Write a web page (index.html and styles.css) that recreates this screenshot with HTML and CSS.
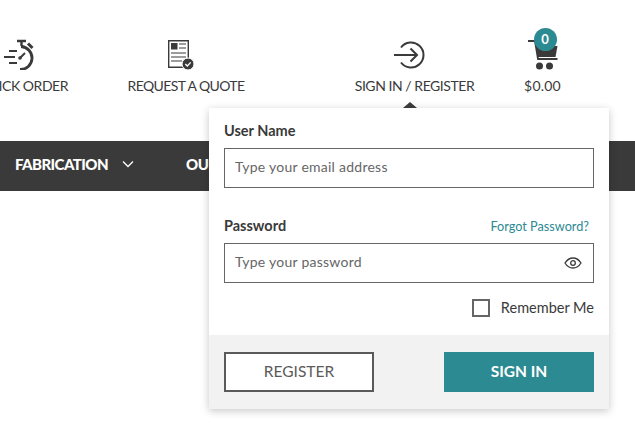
FILE: index.html
```html
<!DOCTYPE html>
<html lang="en">
<head>
<meta charset="utf-8">
<title>Sign in</title>
<link rel="stylesheet" href="styles.css">
</head>
<body>
<header class="top">
  <a class="tool tool-quick">
    <svg class="ico ico-quick" width="36" height="32" viewBox="0 0 36 32" fill="none" stroke="#3a3a3a" stroke-width="2.4">
      <path d="M14 3h9M18.500 3v5"/>
      <path d="M25 5.500l4.500 4.500" stroke-width="3"/>
      <path d="M18 8.500a11.500 11.500 0 1 1 -1 23" stroke-width="2.800"/>
      <path d="M6 13h8M1 19h11M6 25h8" stroke-width="1.800"/>
      <path d="M17 20l5-5" stroke-width="2"/>
      <circle cx="17" cy="20" r="1.800" fill="#3a3a3a" stroke="none"/>
    </svg>
    <span class="tool-label">QUICK ORDER</span>
  </a>
  <a class="tool tool-quote">
    <svg class="ico ico-quote" width="28" height="32" viewBox="0 0 28 32" fill="none" stroke="#3a3a3a">
      <path d="M1.700 2.700h19.600v26.600H1.700z" stroke-width="1.400"/>
      <path d="M4 5h6.500v6.500H4z" fill="#3a3a3a" stroke="none"/>
      <path d="M12 6h7M12 10h7M4 15h15M4 19h15M4 23h11" stroke-width="1.200"/>
      <circle cx="21" cy="26" r="6" fill="#3a3a3a" stroke="#fff" stroke-width="1"/>
      <path d="M18.300 26l2 2 3.400-3.600" stroke="#fff" stroke-width="1.300"/>
    </svg>
    <span class="tool-label">REQUEST A QUOTE</span>
  </a>
  <a class="tool tool-sign">
    <svg class="ico ico-sign" width="32" height="32" viewBox="0 0 32 32" fill="none" stroke="#3a3a3a" stroke-width="2">
      <path d="M7 8.500a12.500 12.500 0 1 1 0 15"/>
      <path d="M0 16h23M16.500 9.500L23 16l-6.500 6.500"/>
    </svg>
    <span class="tool-label">SIGN IN / REGISTER</span>
  </a>
  <a class="tool tool-cart">
    <span class="cart-wrap">
      <svg class="ico" width="32" height="32" viewBox="0 0 32 32" fill="none">
        <path d="M1 3h7l3 18h19.500" stroke="#3a3a3a" stroke-width="1.800"/>
        <path d="M9 8h21.500l-2 11H11z" fill="#3a3a3a"/>
        <circle cx="12.500" cy="28" r="3.500" fill="#3a3a3a"/>
        <circle cx="22.500" cy="28" r="3.500" fill="#3a3a3a"/>
      </svg>
      <span class="badge">0</span>
    </span>
    <span class="tool-label tool-price">$0.00</span>
  </a>
</header>

<nav class="nav">
  <a class="nav-item">FABRICATION
    <svg class="chev" width="12" height="8" viewBox="0 0 12 8" fill="none" stroke="#fff" stroke-width="1.300"><path d="M1 1.500l5 5 5-5"/></svg>
  </a>
  <a class="nav-item nav-second">OUR SERVICES</a>
</nav>

<section class="pop">
  <span class="caret"></span>
  <form class="pop-body">
    <label class="field-label" for="user">User Name</label>
    <input class="input" id="user" type="text" placeholder="Type your email address">
    <div class="pw-head">
      <label class="field-label" for="pw">Password</label>
      <a class="forgot">Forgot Password?</a>
    </div>
    <div class="pw-box">
      <input class="input" id="pw" type="text" placeholder="Type your password">
      <svg class="eye" width="18" height="12" viewBox="0 0 18 12" fill="none" stroke="#3a3a3a" stroke-width="1.300">
        <path d="M1 6c2-3.200 4.800-5 8-5s6 1.800 8 5c-2 3.200-4.800 5-8 5s-6-1.800-8-5z"/>
        <circle cx="9" cy="6" r="2.300"/>
      </svg>
    </div>
    <div class="remember">
      <span class="check"></span>
      <span class="remember-text">Remember Me</span>
    </div>
  </form>
  <div class="pop-foot">
    <a class="btn btn-outline">REGISTER</a>
    <a class="btn btn-solid">SIGN IN</a>
  </div>
</section>
</body>
</html>
```
FILE: styles.css
```css
* { box-sizing: border-box; }
html, body { margin: 0; padding: 0; }
body {
  width: 635px;
  height: 432px;
  overflow: hidden;
  background: #fff;
  font-family: "Lato", "Open Sans", sans-serif;
  color: #3a3a3a;
  position: relative;
}
.top {
  height: 141px;
  display: flex;
  padding-top: 38px;
  margin-left: -42px;
}
.tool {
  display: flex;
  flex-direction: column;
  align-items: center;
  flex: none;
}
.tool-quick { width: 130px; }
.tool-quote { width: 196px; }
.tool-sign { width: 174px; margin-left: 43.500px; }
.tool-cart { width: 82px; }
.ico { display: block; flex: none; }
.ico-quick { margin-right: 4px; }
.ico-quote { margin-right: 10px; }
.ico-sign { margin-right: 9px; margin-top: 1px; margin-bottom: -1px; }
.tool-label {
  margin-top: 7px;
  font-size: 14px;
  line-height: 18px;
  letter-spacing: -0.45px;
  white-space: nowrap;
  color: #3a3a3a;
}
.tool-quote .tool-label { letter-spacing: -0.6px; }
.tool-label.tool-price { letter-spacing: 0.2px; }
.cart-wrap { position: relative; display: block; }
.badge {
  position: absolute;
  top: -10px;
  left: 7px;
  width: 23px;
  height: 23px;
  border-radius: 50%;
  background: #2b8a92;
  color: #fff;
  font-size: 13px;
  font-weight: 700;
  line-height: 23px;
  text-align: center;
}
.nav {
  height: 50px;
  background: #3a3a3a;
  display: flex;
  align-items: center;
  padding-left: 15px;
  padding-bottom: 4px;
  color: #fff;
}
.nav-item {
  font-size: 15px;
  font-weight: 900;
  letter-spacing: -0.55px;
  white-space: nowrap;
  display: flex;
  align-items: center;
}
.chev { margin-left: 14px; }
.nav-second { margin-left: 52px; }
.pop {
  position: absolute;
  left: 209px;
  top: 108px;
  width: 400px;
  height: 301px;
  background: #fff;
  box-shadow: 0 2px 8px rgba(0, 0, 0, 0.22);
  display: flex;
  flex-direction: column;
}
.caret {
  position: absolute;
  top: -6px;
  left: 194px;
  width: 0;
  height: 0;
  border-left: 7px solid transparent;
  border-right: 7px solid transparent;
  border-bottom: 6px solid #3a3a3a;
}
.pop-body {
  flex: 1;
  padding: 14px 15px 0;
}
.field-label {
  display: block;
  font-size: 14.500px;
  font-weight: 700;
  line-height: 17px;
  color: #3a3a3a;
}
.input {
  display: block;
  width: 100%;
  height: 40px;
  margin-top: 9px;
  padding: 0 10px 4px;
  border: 1px solid #666;
  border-radius: 0;
  background: #fff;
  font-family: inherit;
  font-size: 14px;
  letter-spacing: 0.25px;
  color: #3a3a3a;
  outline: none;
}
.input::placeholder { color: #666; opacity: 1; }
.pw-head {
  display: flex;
  justify-content: space-between;
  align-items: center;
  margin-top: 29px;
  padding-right: 5px;
}
.forgot {
  font-size: 12.700px;
  color: #2b8a92;
}
.pw-box { position: relative; }
.eye {
  position: absolute;
  right: 12px;
  top: 14px;
}
.remember {
  display: flex;
  justify-content: flex-end;
  align-items: center;
  margin-top: 16px;
}
.check {
  width: 18px;
  height: 18px;
  border: 2px solid #666;
  background: #fff;
}
.remember-text {
  margin-left: 11px;
  font-size: 14.500px;
  line-height: 18px;
  color: #3a3a3a;
}
.pop-foot {
  height: 74px;
  background: #f2f2f2;
  padding: 17px 15px;
  display: flex;
  justify-content: space-between;
}
.btn {
  width: 150px;
  height: 40px;
  display: flex;
  align-items: center;
  justify-content: center;
  padding-bottom: 2px;
  font-size: 15.500px;
}
.btn-outline {
  background: #fff;
  border: 2px solid #5a5a5a;
  color: #5a5a5a;
}
.btn-solid {
  background: #2b8a92;
  color: #fff;
  font-weight: 700;
}
```
